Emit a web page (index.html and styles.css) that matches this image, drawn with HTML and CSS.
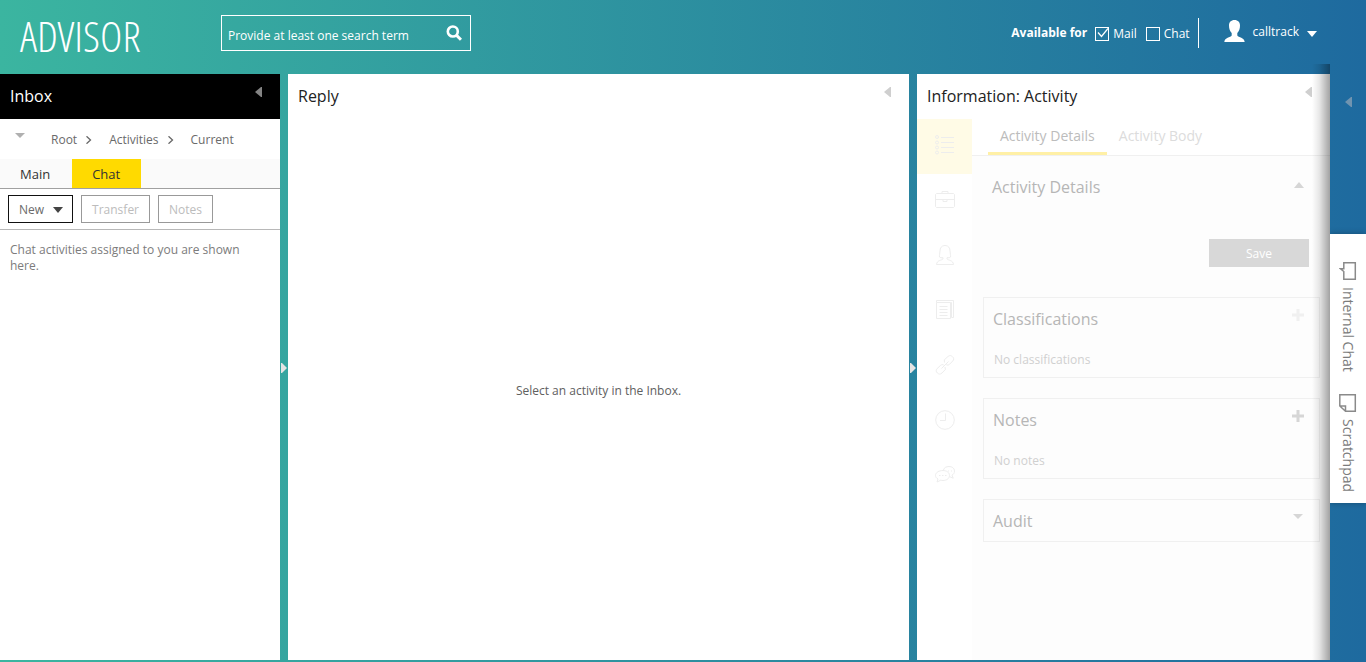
FILE: index.html
```html
<!DOCTYPE html>
<html lang="en">
<head>
<meta charset="utf-8">
<title>Advisor</title>
<link rel="stylesheet" href="styles.css">
</head>
<body>
<div class="app">
  <header class="header">
    <div class="logo">ADVISOR</div>
    <form class="search">
      <input class="search-input" type="text" placeholder="Provide at least one search term" aria-label="Search">
      <button class="search-button" type="button" aria-label="Search">
        <svg width="16" height="16" viewBox="0 0 16 16" fill="none" stroke="#fff"><circle cx="6.8" cy="6.5" r="5" stroke-width="2.6"/><path d="M10.6 10.4 15 14.8" stroke-width="3"/></svg>
      </button>
    </form>
    <div class="availability">
      <strong class="available-title">Available for</strong>
      <label class="check"><input type="checkbox" checked>Mail</label>
      <label class="check"><input type="checkbox">Chat</label>
    </div>
    <button class="user" type="button">
      <svg width="21" height="22" viewBox="0 0 21 22" fill="#fff"><path d="M10.5 0C7 0 5 2.300 5 5.500c0 3 .9 5.700 2.700 7.500v2.500C6.500 17.800.7 17.300.3 22h20.400c-.4-4.700-6.200-4.200-7.400-6.500V13C15.100 11.200 16 8.500 16 5.500 16 2.300 14 0 10.500 0z"/></svg>
      <span class="user-name">calltrack</span>
      <svg class="user-arrow" width="10" height="6" viewBox="0 0 10 6" fill="#fff"><path d="M0 0h10L5 6z"/></svg>
    </button>
  </header>

  <main class="workspace">
    <section class="panel inbox">
      <div class="panel-head inbox-head">
        <h2 class="panel-title">Inbox</h2>
        <button class="collapse" type="button" aria-label="Collapse inbox"><svg width="7" height="10" viewBox="0 0 7 10" fill="#848484"><path d="M6 0h1v10H6L0 5z"/></svg></button>
      </div>
      <nav class="crumbs" aria-label="Folders">
        <button class="crumb-toggle" type="button" aria-label="Show folders"><svg width="10" height="5" viewBox="0 0 10 5" fill="#b0b0b0"><path d="M0 0h10L5 5z"/></svg></button>
        <a class="crumb crumb-root" href="#">Root</a>
        <svg class="chevron" width="6" height="8" viewBox="0 0 6 8" fill="none" stroke="#666" stroke-width="1.300"><path d="M.5 0.300 4.500 4 .5 7.700"/></svg>
        <a class="crumb crumb-mid" href="#">Activities</a>
        <svg class="chevron" width="6" height="8" viewBox="0 0 6 8" fill="none" stroke="#666" stroke-width="1.300"><path d="M.5 0.300 4.500 4 .5 7.700"/></svg>
        <a class="crumb crumb-last" href="#">Current</a>
      </nav>
      <div class="queue-tabs">
        <button class="queue-tab" type="button">Main</button>
        <button class="queue-tab queue-tab-on" type="button">Chat</button>
      </div>
      <div class="toolbar">
        <button class="tool tool-new" type="button">New<svg width="10" height="6" viewBox="0 0 10 6" fill="#444"><path d="M0 0h10L5 6z"/></svg></button>
        <button class="tool" type="button" disabled>Transfer</button>
        <button class="tool" type="button" disabled>Notes</button>
      </div>
      <p class="inbox-empty">Chat activities assigned to you are shown here.</p>
    </section>

    <div class="splitter"><svg width="6" height="10" viewBox="0 0 6 10" fill="#e4e4e4"><path d="M0 0h1l5 5-5 5H0z"/></svg></div>

    <section class="panel reply">
      <div class="panel-head">
        <h2 class="panel-title">Reply</h2>
        <button class="collapse" type="button" aria-label="Collapse reply"><svg width="7" height="10" viewBox="0 0 7 10" fill="#cfcfcf"><path d="M6 0h1v10H6L0 5z"/></svg></button>
      </div>
      <p class="reply-empty">Select an activity in the Inbox.</p>
    </section>

    <div class="splitter"><svg width="6" height="10" viewBox="0 0 6 10" fill="#e4e4e4"><path d="M0 0h1l5 5-5 5H0z"/></svg></div>

    <section class="panel info">
      <div class="panel-head">
        <h2 class="panel-title">Information: Activity</h2>
        <button class="collapse" type="button" aria-label="Collapse information"><svg width="7" height="10" viewBox="0 0 7 10" fill="#cfcfcf"><path d="M6 0h1v10H6L0 5z"/></svg></button>
      </div>
      <div class="info-body">
        <nav class="info-nav" aria-label="Information">
          <button class="nav-item nav-item-on" type="button" aria-label="Activity"><svg width="20" height="20" viewBox="0 0 20 20"><circle cx="2" cy="2" r="1.500"/><circle cx="2" cy="7.500" r="1.500"/><circle cx="2" cy="12.500" r="1.500"/><circle cx="2" cy="17.500" r="1.500"/><path d="M6 2.500h13M6 7.500h13M6 12.500h13M6 17.500h13"/></svg></button>
          <button class="nav-item" type="button" aria-label="Case"><svg width="20" height="20" viewBox="0 0 20 20"><path d="M1.500 3.500h17l1 1v12l-1 1h-17l-1-1v-12zM7 3.500v-2h6v2M.5 9.500h7.500M12 9.500h7.500M8 9.500h4v2H8z"/></svg></button>
          <button class="nav-item" type="button" aria-label="Customer"><svg width="20" height="20" viewBox="0 0 20 20"><path d="M10 .5c-3.500 0-5 2.500-5 5.500 0 2-.8 4.500-.5 6 .8.900 2 .700 3.500.700v1.300c-1.500 1.500-6 1-6.500 5.500h17c-.5-4.500-5-4-6.500-5.500v-1.300c1.500 0 2.700.2 3.500-.7.300-1.500-.5-4-.5-6 0-3-1.500-5.500-5-5.500z"/></svg></button>
          <button class="nav-item" type="button" aria-label="Articles"><svg width="20" height="20" viewBox="0 0 20 20"><path d="M1.500.500h17v17h-2M1.500 2.500h14v16h-14zM1.500.5v2M15.500 2.500h1v15M4.500 6.500h8M4.500 9.500h8M4.500 12.500h8M4.500 15.500h8"/></svg></button>
          <button class="nav-item" type="button" aria-label="Links"><svg width="20" height="20" viewBox="0 0 20 20"><path d="M9.500 7.500 9.300 4.800 13 1.500c1.500-1.300 3-1.200 4.300 0 1.700 1.400 1.800 3 .4 4.600l-3.200 3.200c-1 .9-2.200 1-3.200.4M10 12l.4 2.500L7 18c-1.500 1.500-3 1.400-4.600 0-1.600-1.400-1.500-3-.2-4.500l3.500-3.200c1-.9 2-.9 3-.3M6.500 13.500l7-7"/></svg></button>
          <button class="nav-item" type="button" aria-label="History"><svg width="20" height="20" viewBox="0 0 20 20"><circle cx="10" cy="10" r="9.300"/><path d="M10.500 3.500v7H5"/></svg></button>
          <button class="nav-item" type="button" aria-label="Discussions"><svg width="20" height="20" viewBox="0 0 20 20"><path d="M8 5.500c3.500 0 6.500 2 6.500 5s-3 5-6.500 5c-1 0-1.500 0-2.200-.3L2 17l1-3c-1.500-.8-2.500-2-2.500-3.500 0-3 3.500-5 7.500-5zM8.500 5C9 2.800 11 1.500 14 1.500c3 0 5.500 1.500 5.500 4.500 0 2-.8 3.200-2.500 4.200l1.200 3-3.500-1.500M4 10.500h1.500M7 10.500h1.500M10 10.500h1.500M13 6h1M16 6h1"/></svg></button>
        </nav>
        <div class="info-main">
          <div class="info-tabs">
            <button class="info-tab info-tab-on" type="button">Activity Details</button>
            <button class="info-tab" type="button">Activity Body</button>
          </div>
          <div class="info-content">
            <section class="details">
              <div class="details-head">
                <h3 class="card-title">Activity Details</h3>
                <svg class="details-arrow" width="10" height="6" viewBox="0 0 10 6" fill="#d6d6d6"><path d="M0 6h10L5 0z"/></svg>
              </div>
              <button class="save" type="button" disabled>Save</button>
            </section>
            <section class="card">
              <div class="card-head">
                <h3 class="card-title">Classifications</h3>
                <button class="icon-button" type="button" aria-label="Add classification"><svg width="12" height="12" viewBox="0 0 12 12" stroke="#f0f0f0" stroke-width="3"><path d="M6 0v12M0 6h12"/></svg></button>
              </div>
              <p class="card-text">No classifications</p>
            </section>
            <section class="card">
              <div class="card-head">
                <h3 class="card-title">Notes</h3>
                <button class="icon-button" type="button" aria-label="Add note"><svg width="12" height="12" viewBox="0 0 12 12" stroke="#d6d6d6" stroke-width="3"><path d="M6 0v12M0 6h12"/></svg></button>
              </div>
              <p class="card-text">No notes</p>
            </section>
            <section class="card">
              <div class="card-head">
                <h3 class="card-title">Audit</h3>
                <button class="icon-button" type="button" aria-label="Expand audit"><svg width="12" height="12" viewBox="0 0 12 12" fill="#d6d6d6"><path d="M1 3h10L6 8z"/></svg></button>
              </div>
            </section>
          </div>
        </div>
      </div>
    </section>

    <aside class="rail">
      <button class="rail-toggle" type="button" aria-label="Expand side bar"><svg width="7" height="10" viewBox="0 0 7 10" fill="#7094b0"><path d="M6 0h1v10H6L0 5z"/></svg></button>
      <div class="rail-tabs">
        <button class="rail-tab" type="button"><svg width="18" height="20" viewBox="0 0 18 20" fill="none" stroke="#8a8a8a" stroke-width="1.500"><path d="M4.800 1.800h11.500v16.500H4.800V10.500L1.500 7.800h3.300z"/></svg>Internal Chat</button>
        <button class="rail-tab" type="button"><svg width="18" height="20" viewBox="0 0 18 20" fill="none" stroke="#8a8a8a" stroke-width="1.500"><path d="M.800 1.800h15.500v16.500H6.500L.800 13zM.800 13h5.700v5.300"/></svg>Scratchpad</button>
      </div>
    </aside>
  </main>
</div>
</body>
</html>
```

FILE: styles.css
```css
* {
  box-sizing: border-box;
}

body {
  margin: 0;
  font-family: "Open Sans", "Noto Sans", sans-serif;
  font-size: 12px;
  line-height: 16px;
  color: #6a6a6a;
}

button,
input {
  margin: 0;
  padding: 0;
  border: 0;
  border-radius: 0;
  background: none;
  color: inherit;
  font: inherit;
}

h2,
h3,
p {
  margin: 0;
  font-weight: 400;
}

a {
  color: inherit;
  text-decoration: none;
}

svg {
  display: block;
  flex: none;
}

.app {
  display: flex;
  flex-direction: column;
  min-height: 100vh;
  padding-bottom: 2px;
  background: linear-gradient(90deg, #3bb5a0, #1e6a9f);
}

/* Header */
.header {
  display: flex;
  height: 74px;
  padding-left: 20px;
  padding-right: 49px;
  color: #fff;
}

.logo {
  width: 201px;
  padding-top: 12px;
  font-family: "Open Sans Condensed Light", "Roboto Condensed Light", "Roboto Condensed", "Liberation Sans Narrow", sans-serif;
  font-size: 43px;
  font-weight: 300;
  line-height: 48px;
}

.search {
  display: flex;
  align-items: center;
  width: 250px;
  height: 36px;
  margin-top: 15px;
  padding: 0 8px 0 6px;
  border: 1px solid #fff;
}

.search-input {
  flex: 1;
  min-width: 0;
  padding-top: 6px;
  outline: 0;
}

.search-input::placeholder {
  color: #fff;
  opacity: 1;
}

.availability {
  display: flex;
  align-items: center;
  height: 30px;
  margin-top: 18px;
  margin-left: auto;
  padding-right: 8px;
  border-right: 1px solid #fff;
}

.available-title {
  margin-right: 8px;
}

.check {
  display: flex;
  align-items: center;
  gap: 4px;
  padding-top: 2px;
}

.check + .check {
  margin-left: 9px;
}

.check input {
  width: 14px;
  height: 14px;
  border: 1px solid #fff;
  appearance: none;
}

.check input:checked {
  background: no-repeat center / 12px 12px url("data:image/svg+xml,%3Csvg xmlns='http://www.w3.org/2000/svg' viewBox='0 0 12 12'%3E%3Cpath d='M2 4.500l3.500 4L12 .5' fill='none' stroke='white' stroke-width='1.300'/%3E%3C/svg%3E");
}

.user {
  display: flex;
  align-items: center;
  gap: 8px;
  height: 24px;
  margin-top: 19px;
  margin-left: 25px;
}

.user-name {
  padding-top: 2px;
}

.user-arrow {
  margin-top: 5px;
}

/* Panels */
.workspace {
  display: flex;
  flex: 1;
}

.panel {
  display: flex;
  flex-direction: column;
  background: #fff;
}

.inbox {
  width: 280px;
}

.reply {
  flex: 1;
}

.info {
  width: 413px;
}

.splitter {
  display: flex;
  align-items: center;
  width: 8px;
  padding-top: 2px;
  padding-left: 1px;
}

.panel-head {
  display: flex;
  justify-content: space-between;
  align-items: flex-start;
  height: 45px;
  padding: 12px 18px 0 10px;
  color: #222;
}

.inbox-head {
  background: #000;
  color: #fff;
}

.panel-title {
  font-size: 16px;
  line-height: 20px;
}

.collapse {
  margin-top: 1px;
}

/* Inbox */
.crumbs {
  display: flex;
  align-items: center;
  height: 40px;
  padding-top: 2px;
  padding-left: 15px;
}

.crumb-toggle {
  margin-bottom: 10px;
}

.crumb-root {
  margin-left: 26px;
}

.crumb-mid,
.crumb-last {
  margin-left: 17px;
}

.chevron {
  margin-left: 9px;
}

.queue-tabs {
  display: flex;
  gap: 2px;
  height: 30px;
  border-bottom: 1px solid #a0a0a0;
  background: #fafafa;
  color: #333;
}

.queue-tab {
  padding: 0 20px;
  font-size: 13px;
}

.queue-tab-on {
  padding-right: 21px;
  background: #ffda00;
}

.toolbar {
  display: flex;
  gap: 8px;
  height: 41px;
  padding: 6px 8px;
  border-bottom: 1px solid #b8b8b8;
}

.tool {
  display: flex;
  align-items: center;
  height: 28px;
  padding: 2px 10px 0;
  border: 1px solid #999;
  color: #bcbcbc;
}

.tool-new {
  gap: 9px;
  padding-right: 9px;
  border-color: #111;
  color: #6a6a6a;
}

.inbox-empty {
  padding: 12px 10px;
  color: #7c7c7c;
}

/* Reply */
.reply-empty {
  margin: auto;
  padding-top: 2px;
  color: #606060;
}

/* Information */
.info-body {
  display: flex;
  flex: 1;
}

.info-nav {
  width: 55px;
}

.nav-item {
  display: flex;
  align-items: center;
  justify-content: center;
  width: 100%;
  height: 55px;
  padding-bottom: 3px;
}

.nav-item svg {
  fill: none;
  stroke: #ededed;
}

.nav-item-on {
  background: #fffbe6;
}

.info-main {
  flex: 1;
  background: #fdfdfd;
}

.info-tabs {
  display: flex;
  height: 37px;
  padding-left: 16px;
  border-bottom: 1px solid #f0f0f0;
  background: #fff;
}

.info-tab {
  height: 36px;
  padding: 0 12px;
  border-bottom: 3px solid transparent;
  color: #dcdcdc;
  font-size: 14px;
}

.info-tab-on {
  border-color: #fff0a6;
  color: #bcbcbc;
}

.info-content {
  display: flex;
  flex-direction: column;
  gap: 20px;
  padding: 20px 10px 0 11px;
}

.details {
  display: flex;
  flex-direction: column;
  gap: 41px;
  padding: 0 11px 10px 9px;
}

.details-head {
  display: flex;
  align-items: center;
  justify-content: space-between;
  padding-right: 5px;
}

.details-arrow {
  margin-bottom: 5px;
}

.card-title {
  color: #b6b6b6;
  font-size: 16px;
  line-height: 22px;
}

.save {
  align-self: flex-end;
  width: 100px;
  height: 28px;
  padding-top: 2px;
  background: #d8d8d8;
  color: #fff;
}

.card {
  padding: 10px 15px 9px 9px;
  border: 1px solid #f0f0f0;
}

.card-head {
  display: flex;
  align-items: flex-start;
  justify-content: space-between;
}

.icon-button {
  margin-top: 1px;
}

.card-text {
  margin-top: 22px;
  padding-left: 1px;
  color: #d0d0d0;
}

/* Side rail */
.rail {
  position: relative;
  width: 36px;
}

.rail::before {
  content: "";
  position: absolute;
  top: -10px;
  bottom: 0;
  left: -18px;
  width: 18px;
  background: linear-gradient(90deg, rgba(0, 0, 0, 0), rgba(0, 0, 0, 0.09) 40%, rgba(0, 0, 0, 0.36));
  pointer-events: none;
}

.rail-toggle {
  display: block;
  height: 10px;
  margin: 23px 0 0 15px;
}

.rail-tabs {
  display: flex;
  flex-direction: column;
  gap: 21px;
  margin-top: 127px;
  padding: 27px 0 11px;
  background: #fff;
  box-shadow: 0 0 6px rgba(0, 0, 0, 0.3);
  clip-path: inset(-10px 0 -10px 0);
}

.rail-tab {
  display: flex;
  align-items: center;
  gap: 6px;
  width: 36px;
  padding-right: 1px;
  color: #7c7c7c;
  font-size: 14px;
  line-height: 18px;
  writing-mode: vertical-rl;
}
```
